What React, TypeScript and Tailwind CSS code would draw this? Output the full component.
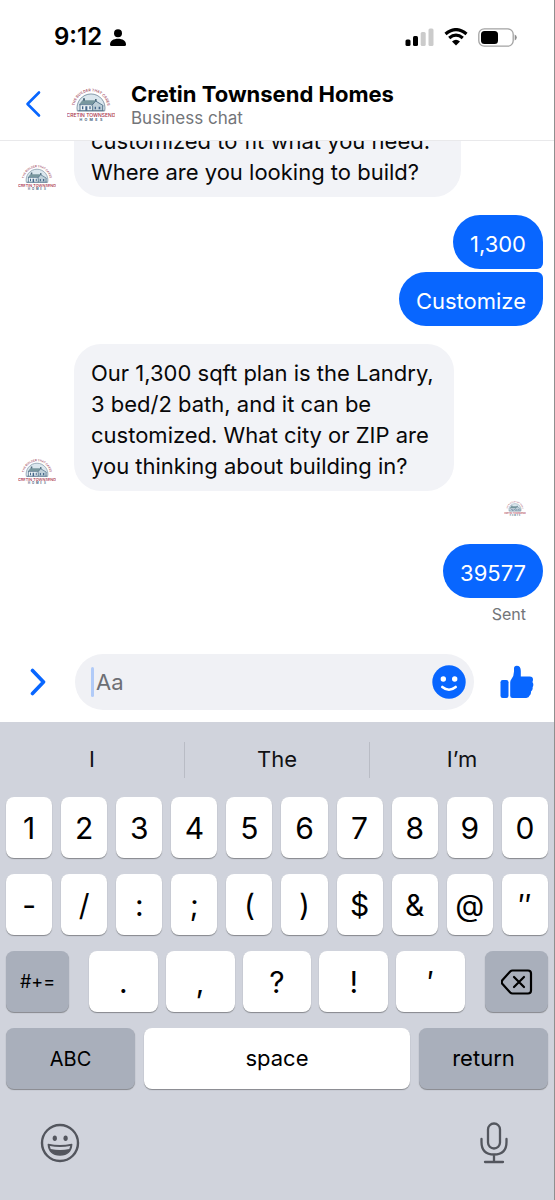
import type { ReactNode } from "react";

import { useState } from "react";

const NUMBER_KEYS = ["1", "2", "3", "4", "5", "6", "7", "8", "9", "0"];
const SYMBOL_KEYS = ["-", "/", ":", ";", "(", ")", "$", "&", "@", "″"];
const PUNCTUATION_KEYS = [".", ",", "?", "!", "′"];
const SUGGESTIONS = ["I", "The", "I’m"];

const Logo = ({ className, id }: { className: string; id: string }) => (
  <svg viewBox="0 0 144 108" className={className} aria-hidden="true">
    <defs>
      <path id={id} d="M23 76 A50 50 0 1 1 121 76" />
    </defs>
    <path
      d="M31 75 A42 42 0 1 1 113 75 Z"
      fill="#dbe7ee"
      stroke="#71899b"
      strokeWidth="2.5"
    />
    <path d="M37 55 L46 43 H83 L95 55 Z" fill="#78979e" />
    <path d="M48 44 V37 H54 V44 M84 47 V39 H89 V47" fill="#506c7d" />
    <path d="M39 55 H84 V74 H39 Z" fill="#eef4f6" />
    <path d="M74 59 L86 45 L109 59 V74 H74 Z" fill="#bfd0d9" />
    <path
      d="M37 56 H77 M74 59 L86 45 L109 59 M39 55 V74 M77 59 V74 M107 59 V74 M34 74 H110"
      fill="none"
      stroke="#456780"
      strokeWidth="2.5"
    />
    <path
      d="M45 61 H49 V70 H45 Z M55 61 H61 V74 H55 Z M67 61 H71 V70 H67 Z M83 62 H87 V70 H83 Z M95 62 H100 V70 H95 Z"
      fill="#45688c"
    />
    <text fontSize="11" fontWeight="600" fill="#a8586c">
      <textPath href={`#${id}`} startOffset="50%" textAnchor="middle">
        THE BUILDER THAT CARES
      </textPath>
    </text>
    <text
      x="72"
      y="92"
      textAnchor="middle"
      fontSize="15"
      fontWeight="500"
      fill="#a72f48"
    >
      CRETIN TOWNSEND
    </text>
    <text
      x="75"
      y="106"
      textAnchor="middle"
      fontSize="11"
      fontWeight="700"
      fill="#4d6580"
      className="tracking-[7px]"
    >
      HOMES
    </text>
  </svg>
);

const StatusBar = () => (
  <div className="flex items-center justify-between pt-[21px] pr-[37px] pl-[54px]">
    <div className="flex items-center gap-2">
      <span className="text-2xl leading-8 font-semibold">9:12</span>
      <svg viewBox="0 0 16 17" className="h-[17px] w-4" aria-hidden="true">
        <circle cx="8" cy="4.2" r="4" />
        <path d="M0 15.5 C0 11.8 3.5 9.7 8 9.7 S16 11.8 16 15.5 Q16 17 14.5 17 H1.5 Q0 17 0 15.5Z" />
      </svg>
    </div>
    <div className="flex items-center gap-[10px]">
      <svg viewBox="0 0 29 18" className="h-[18px] w-[29px]" aria-hidden="true">
        <rect x="0.5" y="11.5" width="5" height="6.5" rx="1.5" />
        <rect x="8" y="8" width="5" height="10" rx="1.5" />
        <rect x="15.7" y="4" width="5" height="14" rx="1.5" fill="#cbcbcb" />
        <rect x="23.5" y="0.5" width="5" height="17.5" rx="1.5" fill="#cbcbcb" />
      </svg>
      <svg viewBox="0 0 24 18" className="h-[18px] w-6" aria-hidden="true">
        <path
          d="M1.5 6 Q12 -2.8 22.5 6 M5.2 10 Q12 4.3 18.8 10"
          fill="none"
          stroke="black"
          strokeWidth="3.2"
        />
        <path d="M8 13.4 Q12 10 16 13.4 L12 17.6Z" />
      </svg>
      <svg viewBox="0 0 39 19" className="h-[19px] w-[39px]" aria-hidden="true">
        <rect
          x="0.8"
          y="0.8"
          width="34.4"
          height="17.4"
          rx="5.5"
          fill="none"
          stroke="#a3a3a3"
          strokeWidth="1.3"
        />
        <rect x="3" y="3" width="17" height="13" rx="3.5" />
        <path d="M36.7 6.5 Q38.8 7.6 38.8 9.5 T36.7 12.5Z" fill="#8d8d8d" />
      </svg>
    </div>
  </div>
);

const Received = ({
  children,
  logoId,
  className,
}: {
  children: ReactNode;
  logoId: string;
  className: string;
}) => (
  <div className="flex items-end gap-[18px] pl-[18px]">
    <Logo id={logoId} className="mb-[6px] h-7 w-[38px] shrink-0" />
    <p
      className={`bg-[#f2f3f7] px-[17px] pt-[14px] pb-[9px] text-[#080809] ${className}`}
    >
      {children}
    </p>
  </div>
);

const Sent = ({
  children,
  className = "",
}: {
  children: ReactNode;
  className?: string;
}) => (
  <p
    className={`rounded-[27px] bg-[#0866ff] px-[17px] pt-[14px] pb-[9px] text-white ${className}`}
  >
    {children}
  </p>
);

const Key = ({
  children,
  label,
  className = "flex-1 bg-white text-3xl",
}: {
  children: ReactNode;
  label?: string;
  className?: string;
}) => (
  <button
    aria-label={label}
    className={`flex h-[61px] min-w-0 items-center justify-center rounded-lg shadow-[0_1px_1px_#85878c] ${className}`}
  >
    {children}
  </button>
);

const App = () => {
  const [message, setMessage] = useState<string>("");

  return (
    <div className="flex h-screen flex-col overflow-hidden border-r border-[#8f8f8f] bg-white font-['Inter',sans-serif] text-black">
      <header className="shrink-0 border-b border-[#e9e9eb]">
        <StatusBar />
        <div className="flex items-center pt-[27px] pr-4 pb-3 pl-[25px]">
          <button aria-label="Back" className="mr-[26px]">
            <svg viewBox="0 0 16 28" className="h-7 w-4" aria-hidden="true">
              <path
                d="M14 2.5 L2.5 14 L14 25.5"
                fill="none"
                stroke="#0866ff"
                strokeWidth="2.6"
                strokeLinecap="round"
                strokeLinejoin="round"
              />
            </svg>
          </button>
          <Logo id="header-arch" className="h-9 w-12 shrink-0" />
          <div className="ml-4">
            <h1 className="text-[22px] leading-7 font-bold">
              Cretin Townsend Homes
            </h1>
            <p className="text-[17px] leading-5 text-[#737579]">Business chat</p>
          </div>
        </div>
      </header>

      <main className="flex min-h-0 flex-1 flex-col justify-end overflow-hidden pb-4 text-[22px] leading-[31px]">
        <Received logoId="first-arch" className="w-[387px] rounded-b-[27px]">
          customized to fit what you need. Where are you looking to build?
        </Received>

        <div className="mt-[18px] mr-[11px] flex flex-col items-end gap-[3px]">
          <Sent className="rounded-br-md">1,300</Sent>
          <Sent className="rounded-tr-md">Customize</Sent>
        </div>

        <div className="mt-[18px]">
          <Received logoId="second-arch" className="w-[380px] rounded-[27px]">
            Our 1,300 sqft plan is the Landry, 3 bed/2 bath, and it can be
            customized. What city or ZIP are you thinking about building in?
          </Received>
        </div>

        <div className="mt-[9px] mr-7 flex justify-end">
          <Logo id="read-arch" className="h-4 w-[22px]" />
        </div>

        <div className="mt-7 mr-[11px] flex flex-col items-end gap-1">
          <Sent>39577</Sent>
          <span className="mr-[17px] text-base leading-6 text-[#737579]">
            Sent
          </span>
        </div>
      </main>

      <div className="flex shrink-0 items-center py-3 pr-5 pl-[29px]">
        <button aria-label="More actions" className="mr-7 shrink-0">
          <svg viewBox="0 0 18 28" className="h-7 w-[18px]" aria-hidden="true">
            <path
              d="M3.5 2.5 L14.5 14 L3.5 25.5"
              fill="none"
              stroke="#0866ff"
              strokeWidth="3.6"
              strokeLinecap="round"
              strokeLinejoin="round"
            />
          </svg>
        </button>
        <div className="flex h-14 min-w-0 flex-1 items-center rounded-full bg-[#f0f1f5] pr-2 pl-4">
          <span className="mr-[2px] h-[30px] w-[3px] shrink-0 rounded-full bg-[#b1cbf8]" />
          <input
            aria-label="Message"
            type="text"
            placeholder="Aa"
            className="w-full min-w-0 flex-1 bg-transparent text-[22px] outline-none placeholder:text-[#6d6f74]"
            value={message}
            onChange={(e) => setMessage(e.target.value)}
          />
          <button aria-label="Emoji" className="shrink-0">
            <svg viewBox="0 0 34 34" className="size-[34px]" aria-hidden="true">
              <circle cx="17" cy="17" r="16.7" fill="#0866ff" />
              <circle cx="11.3" cy="14" r="2.7" fill="white" />
              <circle cx="22.7" cy="14" r="2.7" fill="white" />
              <path
                d="M10.3 22 Q17 27.5 23.7 22"
                fill="none"
                stroke="white"
                strokeWidth="2.6"
                strokeLinecap="round"
              />
            </svg>
          </button>
        </div>
        <button aria-label="Send like" className="ml-[26px] shrink-0">
          <svg
            viewBox="0 0 34 34"
            className="size-[34px]"
            fill="#0866ff"
            aria-hidden="true"
          >
            <rect x="0.5" y="15" width="8" height="18" rx="2.2" />
            <path d="M10.2 17.5 Q10.2 15.8 11.2 14.6 Q14 11 14 6.5 V3.6 Q14 0.8 16.7 0.8 Q20.8 0.8 20.8 6 V11.5 H29.7 Q33 11.5 33 14.5 Q33 16 32.4 17 Q34.2 19.5 32.6 22.2 Q33.1 24.8 31 26.6 Q31.2 29.2 29.6 30.6 Q29 33 26.2 33 H12.5 Q10.2 33 10.2 30.7Z" />
          </svg>
        </button>
      </div>

      <section aria-label="Keyboard" className="shrink-0 bg-[#d0d3dc]">
        <div className="flex h-[75px] items-center">
          {SUGGESTIONS.map((word) => (
            <button
              key={word}
              className="h-9 flex-1 border-l border-[#b9bcc5] text-[22px] text-[#101114] first:border-l-0"
            >
              {word}
            </button>
          ))}
        </div>
        <div className="flex flex-col gap-4 px-[6px]">
          <div className="flex gap-[9px]">
            {NUMBER_KEYS.map((key) => (
              <Key key={key}>{key}</Key>
            ))}
          </div>
          <div className="flex gap-[9px]">
            {SYMBOL_KEYS.map((key) => (
              <Key key={key}>{key}</Key>
            ))}
          </div>
          <div className="flex gap-5">
            <Key className="w-[63px] shrink-0 bg-[#a9afbb] text-lg">#+=</Key>
            <div className="flex flex-1 gap-2">
              {PUNCTUATION_KEYS.map((key) => (
                <Key key={key}>{key}</Key>
              ))}
            </div>
            <Key label="Delete" className="w-[63px] shrink-0 bg-[#a9afbb]">
              <svg
                viewBox="0 0 32 26"
                className="h-[26px] w-8"
                fill="none"
                stroke="black"
                strokeWidth="2.2"
                strokeLinecap="round"
                strokeLinejoin="round"
                aria-hidden="true"
              >
                <path d="M11.5 1.5 H27 Q30 1.5 30 4.5 V21.5 Q30 24.5 27 24.5 H11.5 Q10.2 24.5 9.2 23.5 L1.5 15 Q0 13 1.5 11 L9.2 2.5 Q10.2 1.5 11.5 1.5Z" />
                <path d="M13 8 L23 18 M23 8 L13 18" />
              </svg>
            </Key>
          </div>
          <div className="flex gap-[9px]">
            <Key className="w-[129px] shrink-0 bg-[#a9afbb] text-xl">ABC</Key>
            <Key className="flex-1 bg-white text-[22px]">space</Key>
            <Key className="w-[129px] shrink-0 bg-[#a9afbb] text-[22px]">
              return
            </Key>
          </div>
        </div>
        <div className="flex h-[111px] items-center justify-between pr-[46px] pb-1 pl-10">
          <button aria-label="Emoji keyboard">
            <svg viewBox="0 0 40 40" className="size-10" aria-hidden="true">
              <circle
                cx="20"
                cy="20"
                r="18"
                fill="none"
                stroke="#53565e"
                strokeWidth="2.4"
              />
              <ellipse cx="14.8" cy="15.3" rx="2.1" ry="2.7" fill="#53565e" />
              <ellipse cx="25.6" cy="15.3" rx="2.1" ry="2.7" fill="#53565e" />
              <path
                d="M8.3 21.5 Q20 24 31.7 21.5 Q31 32 20 32 T8.3 21.5Z"
                fill="#53565e"
                stroke="#53565e"
                strokeWidth="1.4"
                strokeLinejoin="round"
              />
              <path d="M9.8 23 Q20 25 30.2 23 L29.3 26 Q20 28 10.7 26Z" fill="#d0d3dc" />
            </svg>
          </button>
          <button aria-label="Dictate">
            <svg
              viewBox="0 0 28 42"
              className="h-[42px] w-7"
              fill="none"
              stroke="#53565e"
              strokeWidth="2.3"
              strokeLinecap="round"
              aria-hidden="true"
            >
              <rect x="8" y="1.5" width="12" height="25" rx="6" />
              <path d="M1.5 17 V20 Q1.5 32.5 14 32.5 T26.5 20 V17 M14 32.5 V40 M5 40 H23" />
            </svg>
          </button>
        </div>
      </section>
    </div>
  );
};

export default App;
